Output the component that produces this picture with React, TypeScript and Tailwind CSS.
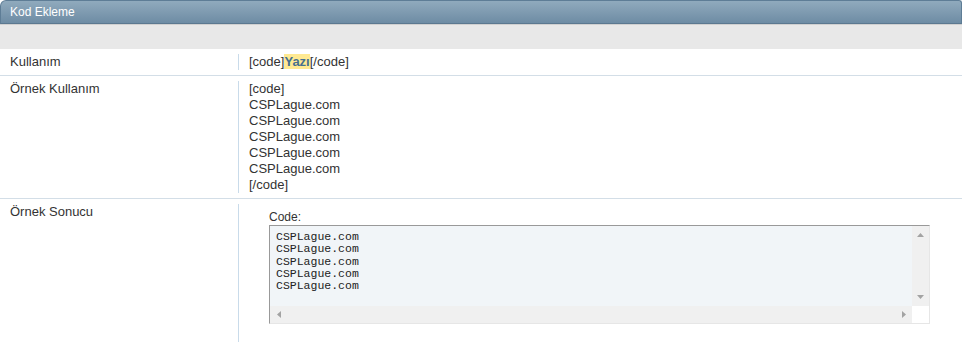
import React from "react";

const lines = ["CSPLague.com", "CSPLague.com", "CSPLague.com", "CSPLague.com", "CSPLague.com"];

const Row: React.FC<{ label: string; children: React.ReactNode; last?: boolean }> = ({ label, children, last }) => (
  <div className={`flex ${last ? "" : "border-b border-[#d3dee7]"}`}>
    <div className="w-[238px] shrink-0 pl-[10px] py-[5px] leading-[16px]">{label}</div>
    <div className="flex-1 py-[5px]">
      <div className="border-l border-[#c9dbea] pl-[10px] leading-[16px] h-full">{children}</div>
    </div>
  </div>
);

const Arrow: React.FC<{ dir: "up" | "down" | "left" | "right" }> = ({ dir }) => {
  const pts = {
    up: "0,4 3.5,0 7,4",
    down: "0,0 7,0 3.5,4",
    left: "4,0 4,7 0,3.5",
    right: "0,0 4,3.5 0,7",
  }[dir];
  const w = dir === "up" || dir === "down" ? 7 : 4;
  const h = dir === "up" || dir === "down" ? 4 : 7;
  return (
    <svg width={w} height={h} viewBox={`0 0 ${w} ${h}`}>
      <polygon points={pts} fill="#a3a3a3" />
    </svg>
  );
};

const CodeBox: React.FC = () => (
  <div className="ml-[20px] pt-[5px] pb-[20px]">
    <div className="text-[12px] leading-[16px] text-[#333]">Code:</div>
    <div className="w-[661px] border-t border-l border-[#999] border-r border-b border-r-[#e6e6e6] border-b-[#e6e6e6] flex flex-col">
      <div className="flex h-[80px]">
        <div
          className="flex-1 bg-[#f1f5f8] pl-[6px] pt-[5px] text-[11.5px] leading-[12.25px] text-[#222]"
          style={{ fontFamily: '"Liberation Mono", "Courier New", monospace' }}
        >
          {lines.map((l, i) => (
            <div key={i}>{l}</div>
          ))}
        </div>
        <div className="w-[17px] bg-[#f0f0f0] flex flex-col items-center justify-between pt-[7px] pb-[7px]">
          <Arrow dir="up" />
          <Arrow dir="down" />
        </div>
      </div>
      <div className="flex h-[17px]">
        <div className="flex-1 bg-[#f0f0f0] flex items-center justify-between pl-[7px] pr-[6px]">
          <Arrow dir="left" />
          <Arrow dir="right" />
        </div>
        <div className="w-[17px] bg-white" />
      </div>
    </div>
  </div>
);

export default function App() {
  return (
    <div
      className="w-[962px] h-[342px] bg-white overflow-hidden text-[13px] text-[#333]"
      style={{ fontFamily: '"Liberation Sans", Arial, sans-serif' }}
    >
      {/* Title bar */}
      <div className="h-[24px] rounded-tl-[6px] rounded-tr-[3px] border border-[#5e7d96] border-b-[#5b7890] bg-gradient-to-b from-[#90aabd] to-[#6e8ca4] flex items-center pl-[9px] text-white text-[12px]">
        Kod Ekleme
      </div>
      <div className="h-[25px] bg-[#e8e8e8] border-t border-[#d0d0d0]" />

      <Row label="Kullanım">
        [code]
        <span className="bg-[#ffe991] text-[#46708f] font-bold">Yazı</span>
        [/code]
      </Row>

      <Row label="Örnek Kullanım">
        <div>[code]</div>
        {lines.map((l, i) => (
          <div key={i}>{l}</div>
        ))}
        <div>[/code]</div>
      </Row>

      <Row label="Örnek Sonucu" last>
        <CodeBox />
      </Row>
    </div>
  );
}
